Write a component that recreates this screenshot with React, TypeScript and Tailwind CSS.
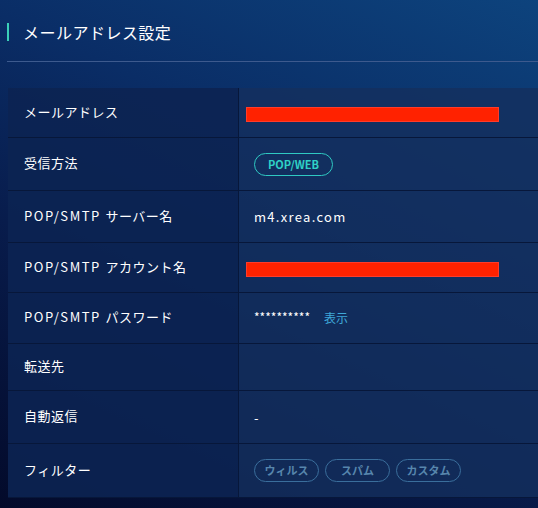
import React from "react";

const font = { fontFamily: '"Noto Sans CJK JP", "Noto Sans", sans-serif' };

function Row({ label, children, h }: { label: React.ReactNode; children?: React.ReactNode; h: string }) {
  return (
    <div className={`flex border-b border-[#07173a] ${h}`}>
      <div className="w-[231px] shrink-0 flex items-center pl-4 pb-[2px] text-[13px] tracking-[0.04em] text-white bg-[#0c2452]/90 border-r border-[#07173a]">
        {label}
      </div>
      <div className="flex-1 flex items-center pl-[15px] bg-[#14305e]/80">{children}</div>
    </div>
  );
}

function Pop({ rest }: { rest: string }) {
  return (
    <span>
      <span className="tracking-[0.12em]">POP/SMTP </span>
      {rest}
    </span>
  );
}

function Pill({ text }: { text: string }) {
  return (
    <span className="h-[23px] w-[65px] flex items-center justify-center rounded-full border border-[#3a6e9c] text-[11px] font-bold text-[#5786ad]">
      {text}
    </span>
  );
}

export default function App() {
  return (
    <div
      style={font}
      className="w-[538px] h-[508px] overflow-hidden bg-[linear-gradient(205deg,#0d437d_0%,#0a2d66_35%,#081c4c_62%,#030a2a_100%)]"
    >
      <div className="pt-[23px] pl-[7px]">
        <div className="flex items-center h-[18px] border-l-2 border-[#3bd0b8] pl-[14px] text-[16px] tracking-[0.03em] text-white">
          メールアドレス設定
        </div>
      </div>
      <div className="mt-[20px] ml-[7px] h-px bg-[#3d5a8e]" />
      <div className="mt-[26px] ml-[8px]">
        <Row label="メールアドレス" h="h-[50px]">
          <div className="ml-[-8px] mt-[4px] w-[253px] h-[15px] bg-[#ff2200] border border-[#ff3b2a]" />
        </Row>
        <Row label="受信方法" h="h-[53px]">
          <span className="h-[23px] w-[79px] flex items-center justify-center rounded-full border border-[#2fc9c2] text-[11px] font-bold text-[#2fd0c6]">
            POP/WEB
          </span>
        </Row>
        <Row label={<Pop rest="サーバー名" />} h="h-[52px]">
          <span className="text-[13px] tracking-[0.1em] text-white">m4.xrea.com</span>
        </Row>
        <Row label={<Pop rest="アカウント名" />} h="h-[50px]">
          <div className="ml-[-8px] mt-[4px] w-[253px] h-[15px] bg-[#ff2200] border border-[#ff3b2a]" />
        </Row>
        <Row label={<Pop rest="パスワード" />} h="h-[51px]">
          <span className="text-[12px] text-white pb-[2px]">**********</span>
          <span className="ml-[14px] text-[12px] text-[#3fa8d8]">表示</span>
        </Row>
        <Row label="転送先" h="h-[47px]" />
        <Row label="自動返信" h="h-[53px]">
          <span className="text-[13px] text-white mt-[2px]">-</span>
        </Row>
        <Row label="フィルター" h="h-[54px]">
          <div className="flex gap-[6px]">
            <Pill text="ウィルス" />
            <Pill text="スパム" />
            <Pill text="カスタム" />
          </div>
        </Row>
      </div>
    </div>
  );
}
